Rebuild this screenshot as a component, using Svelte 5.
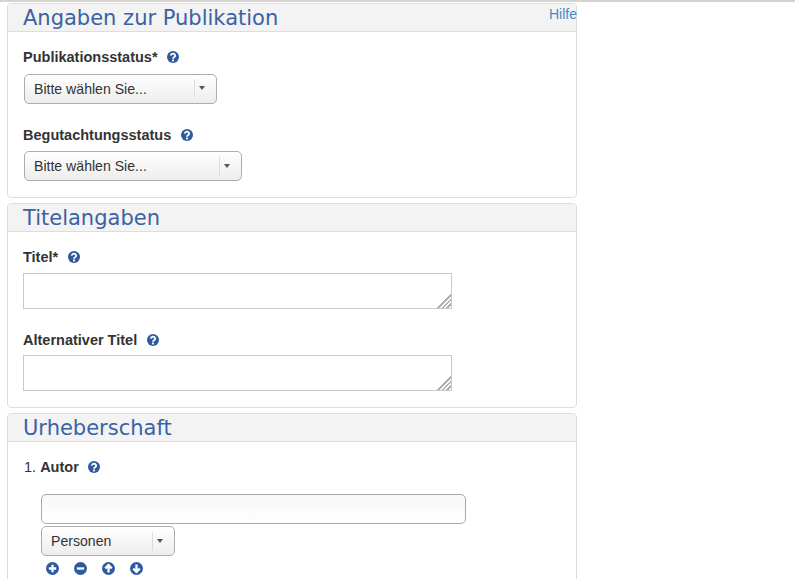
{#snippet helpIcon()}
	<svg class="icon" viewBox="0 0 16 16" width="12" height="12" aria-hidden="true">
		<circle cx="8" cy="8" r="8" fill="#2f5a9e" />
		<path d="M5.2 6.2a2.8 2.5 0 1 1 4.2 2.1c-.9.6-1.4 1-1.4 2" fill="none" stroke="#fff" stroke-width="2.4" />
		<rect x="6.7" y="11.4" width="2.6" height="2.4" fill="#fff" />
	</svg>
{/snippet}

{#snippet action(d)}
	<svg class="action" viewBox="0 0 16 16" width="13" height="13" aria-hidden="true">
		<circle cx="8" cy="8" r="8" fill="#2f5a9e" />
		<path {d} fill="none" stroke="#fff" stroke-width="2.8" />
	</svg>
{/snippet}

{#snippet select(label, width)}
	<div class="select" style="width: {width}px">
		<span class="value">{label}</span>
		<span class="caret"></span>
	</div>
{/snippet}

<main class="page">
	<section class="panel">
		<header>
			<h2>Angaben zur Publikation</h2>
			<a class="hilfe" href="#hilfe">Hilfe</a>
		</header>
		<div class="body first">
			<div class="field">
				<div class="label"><b>Publikationsstatus*</b>{@render helpIcon()}</div>
				{@render select('Bitte wählen Sie...', 193)}
			</div>
			<div class="field">
				<div class="label"><b>Begutachtungsstatus</b>{@render helpIcon()}</div>
				{@render select('Bitte wählen Sie...', 218)}
			</div>
		</div>
	</section>

	<section class="panel">
		<header><h2>Titelangaben</h2></header>
		<div class="body second">
			<div class="field">
				<div class="label"><b>Titel*</b>{@render helpIcon()}</div>
				<div class="textarea"></div>
			</div>
			<div class="field">
				<div class="label"><b>Alternativer Titel</b>{@render helpIcon()}</div>
				<div class="textarea"></div>
			</div>
		</div>
	</section>

	<section class="panel">
		<header><h2>Urheberschaft</h2></header>
		<div class="body third">
			<div class="label author">1.&nbsp;<b>Autor</b>{@render helpIcon()}</div>
			<div class="person">
				<div class="input"></div>
				{@render select('Personen', 134)}
				<div class="actions">
					{@render action('M8 3.5v9M3.5 8h9')}
					{@render action('M3.5 8h9')}
					{@render action('M8 13V4M4 7.8l4-4 4 4')}
					{@render action('M8 3v9M4 8.2l4 4 4-4')}
				</div>
			</div>
		</div>
	</section>
</main>

<style>
	:global(body) {
		overflow: hidden;
		background: #fff;
	}

	.page {
		height: 579px;
		box-sizing: border-box;
		overflow: hidden;
		padding: 3px 0 0 7px;
		position: relative;
		font-family: 'Liberation Sans', Arial, sans-serif;
		font-size: 14.5px;
		color: #333;
		display: flex;
		flex-direction: column;
		gap: 5px;
	}

	.page::before {
		content: '';
		position: absolute;
		left: 0;
		right: 0;
		top: 0;
		height: 2px;
		background: #d5d3cf;
	}

	.panel {
		width: 570px;
		box-sizing: border-box;
		flex: none;
		border: 1px solid #ddd;
		border-radius: 4px;
		background: #fff;
		position: relative;
	}

	header {
		height: 27px;
		background: #f3f3f3;
		border-bottom: 1px solid #ddd;
		border-radius: 3px 3px 0 0;
	}

	h2 {
		margin: 0;
		padding-left: 15px;
		font-family: 'DejaVu Sans', Verdana, sans-serif;
		font-weight: 400;
		font-size: 21px;
		line-height: 29px;
		height: 27px;
		color: #3a62a4;
	}

	.hilfe {
		position: absolute;
		right: -1px;
		top: 1px;
		font-size: 14px;
		color: #428bca;
		text-decoration: none;
		line-height: 18px;
	}

	.body {
		padding: 15px 15px 0;
		display: flex;
		flex-direction: column;
		gap: 21px;
		box-sizing: border-box;
	}

	.body.first {
		min-height: 165px;
	}

	.body.second {
		min-height: 175px;
	}

	.body.third {
		gap: 0;
		min-height: 200px;
	}

	.field {
		display: flex;
		flex-direction: column;
		gap: 6.5px;
	}

	.second .field {
		gap: 5.5px;
	}

	.label {
		display: flex;
		align-items: center;
		line-height: 20px;
		height: 20px;
	}

	.label b {
		color: #333;
	}

	.icon {
		margin-left: 9.5px;
	}

	.select {
		box-sizing: border-box;
		height: 30px;
		margin-left: 1px;
		border: 1px solid #adadad;
		border-radius: 5px;
		background: linear-gradient(#fff, #ededed);
		display: flex;
		align-items: center;
		justify-content: space-between;
		padding-left: 9px;
	}

	.value {
		font-size: 14.1px;
		color: #333;
	}

	.caret {
		width: 21px;
		height: 19px;
		border-left: 1px solid #ddd;
		position: relative;
	}

	.caret::after {
		content: '';
		position: absolute;
		left: 4px;
		top: 7px;
		border: 3px solid transparent;
		border-top: 4px solid #555;
		border-bottom: 0;
	}

	.textarea {
		box-sizing: border-box;
		width: 429px;
		height: 36px;
		border: 1px solid #ccc9c6;
		position: relative;
		background: repeating-linear-gradient(135deg, transparent 0 1.6px, #b0b0b0 1.6px 3.2px) bottom right / 15px 15px no-repeat;
	}

	.textarea::before {
		content: '';
		position: absolute;
		right: 0;
		bottom: 0;
		width: 15px;
		height: 15px;
		background: linear-gradient(135deg, #fff 50%, transparent 50%);
	}

	.author {
		margin: 0 0 17px 1px;
	}

	.person {
		padding-left: 18px;
		display: flex;
		flex-direction: column;
		gap: 2px;
	}

	.person .select {
		margin-left: 0;
	}

	.input {
		box-sizing: border-box;
		width: 425px;
		height: 30px;
		border: 1px solid #a9a9a9;
		border-radius: 5px;
		background: linear-gradient(#f7f7f7, #fff);
	}

	.actions {
		display: flex;
		gap: 15px;
		padding: 4px 0 0 5px;
	}
</style>
